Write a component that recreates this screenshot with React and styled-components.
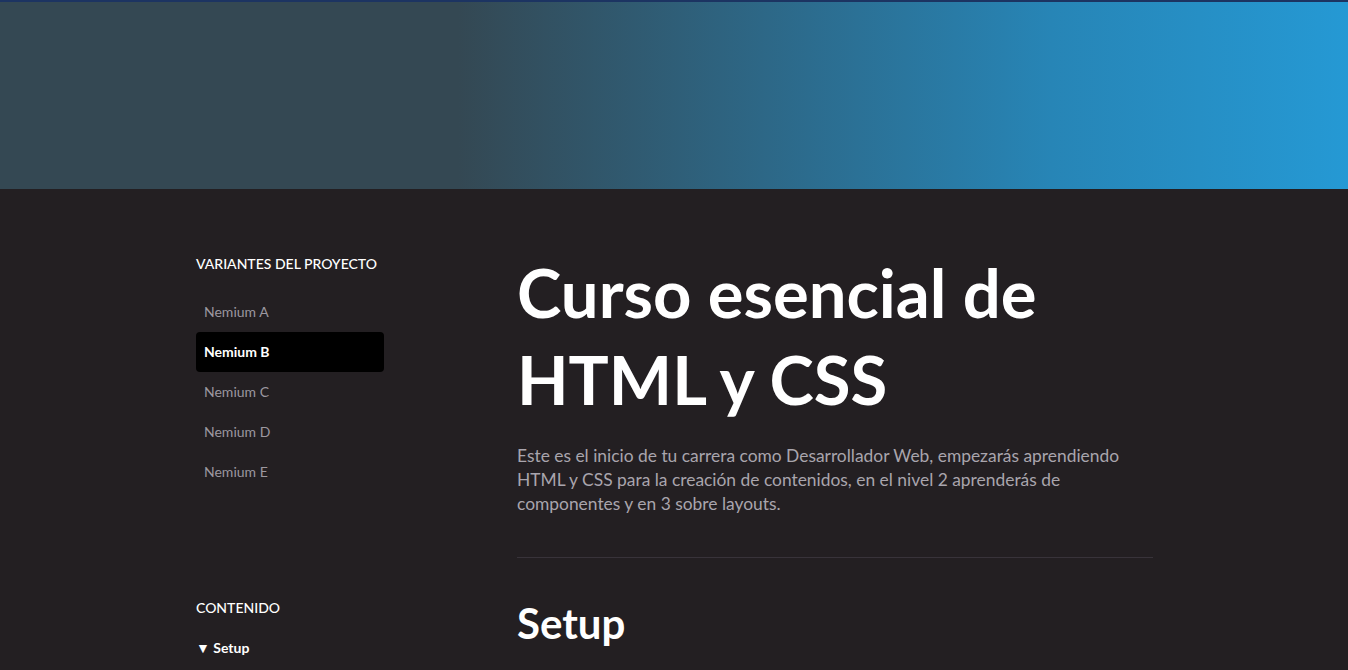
import React from 'react'
import styled, { createGlobalStyle } from 'styled-components'

const Global = createGlobalStyle`
    * { box-sizing: border-box; }
    body {
        margin: 0;
        background: #231f22;
        font-family: Lato, "Open Sans", sans-serif;
        color: #fff;
    }
`

const variantes = ['Nemium A', 'Nemium B', 'Nemium C', 'Nemium D', 'Nemium E']

const App = () => {
    return (
        <>
            <Global />
            <Hero />
            <Layout>
                <Sidebar>
                    <SideTitle>Variantes del proyecto</SideTitle>
                    <NavList>
                        {variantes.map((v) => (
                            <NavItem key={v} active={v === 'Nemium B'}>{v}</NavItem>
                        ))}
                    </NavList>
                    <SideTitle>Contenido</SideTitle>
                    <TocItem>▼ Setup</TocItem>
                </Sidebar>
                <Main>
                    <Title>Curso esencial de HTML y CSS</Title>
                    <Lead>
                        Este es el inicio de tu carrera como Desarrollador Web, empezarás aprendiendo
                        HTML y CSS para la creación de contenidos, en el nivel 2 aprenderás de
                        componentes y en 3 sobre layouts.
                    </Lead>
                    <Divider />
                    <Section>Setup</Section>
                </Main>
            </Layout>
        </>
    )
}

const Hero = styled.header`
    height: 189px;
    border-top: 2px solid #1c3462;
    background: linear-gradient(90deg, #344853 0%, #344853 34%, #2c6c8e 60%, #2785b6 78%, #2599d4 100%);
`

const Layout = styled.div`
    display: flex;
    padding-left: 196px;
`

const Sidebar = styled.aside`
    width: 188px;
    padding-top: 65px;
    margin-right: 133px;
`

const SideTitle = styled.h4`
    margin: 0;
    font-size: 14px;
    font-weight: 500;
    line-height: 20px;
    text-transform: uppercase;
    color: #fff;
`

const NavList = styled.div`
    display: flex;
    flex-direction: column;
    margin: 18px 0 106px;
`

const NavItem = styled.div`
    height: 40px;
    display: flex;
    align-items: center;
    padding-left: 8px;
    padding-bottom: 2px;
    border-radius: 4px;
    font-size: 14px;
    font-weight: ${(p) => (p.active ? 700 : 400)};
    color: ${(p) => (p.active ? '#fff' : '#9c98a0')};
    background: ${(p) => (p.active ? '#000' : 'transparent')};
`

const TocItem = styled.div`
    margin-top: 20px;
    font-size: 14px;
    font-weight: 700;
    line-height: 20px;
`

const Main = styled.main`
    width: 636px;
    padding-top: 60px;
`

const Title = styled.h1`
    margin: 0;
    font-size: 67px;
    font-weight: 700;
    line-height: 87px;
    letter-spacing: 0;
`

const Lead = styled.p`
    margin: 21px 0 0;
    padding-right: 20px;
    font-size: 17.4px;
    line-height: 24px;
    color: #a9a5ad;
`

const Divider = styled.hr`
    margin: 41px 0 0;
    border: 0;
    border-top: 1px solid #38333a;
`

const Section = styled.h2`
    margin: 37px 0 0;
    font-size: 42px;
    font-weight: 700;
    line-height: 56px;
`

export default App
